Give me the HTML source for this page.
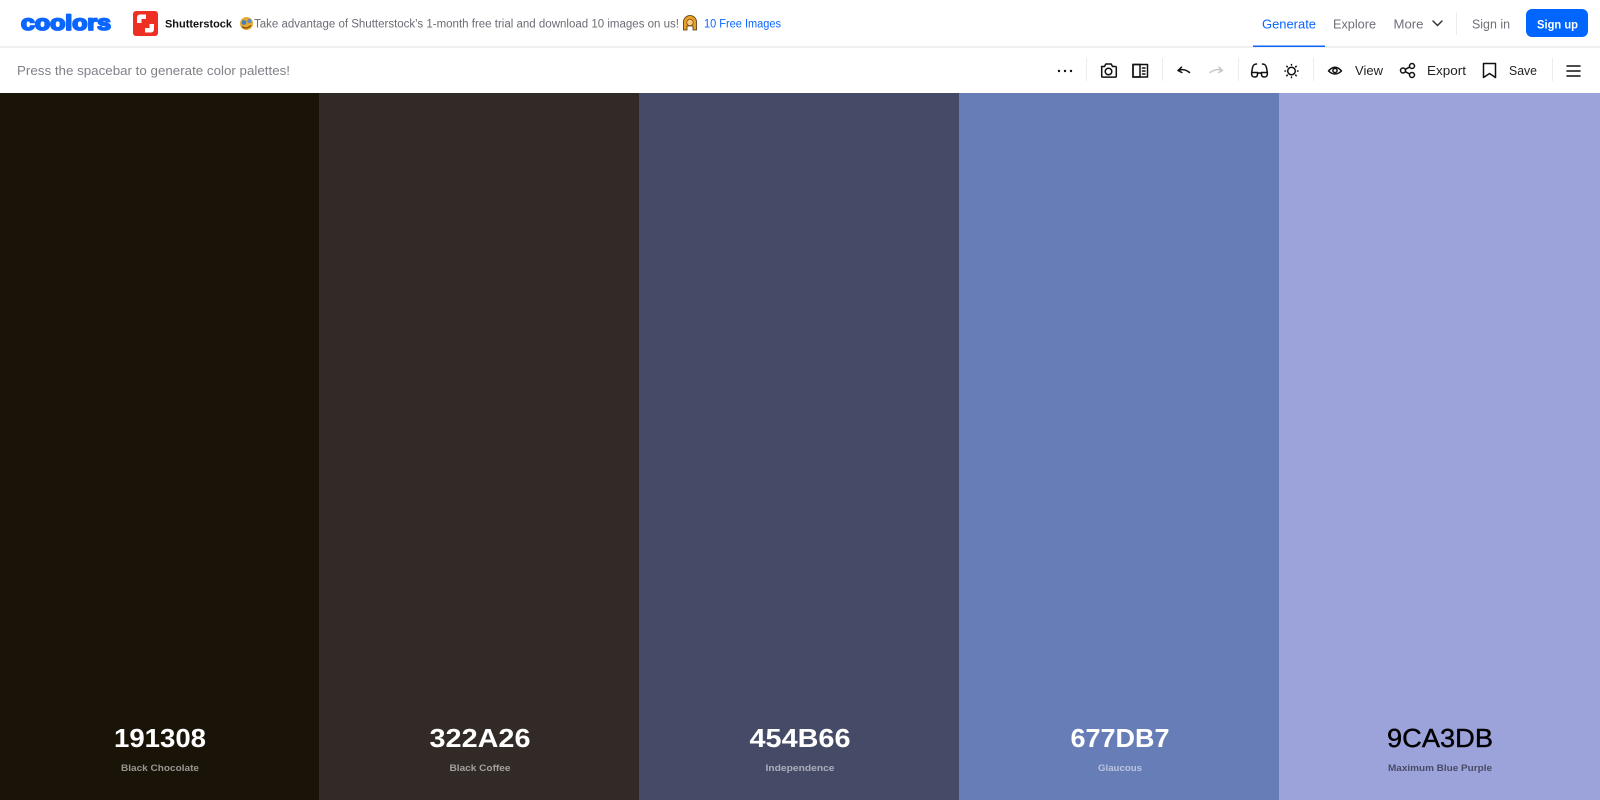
<!DOCTYPE html>
<html lang="en">
<head>
<meta charset="utf-8">
<title>Coolors</title>
<style>
html,body{margin:0;padding:0;width:1600px;height:800px;overflow:hidden;background:#fff}
svg{display:block;position:absolute;left:0;top:0}
text{font-family:"Liberation Sans",Arial,sans-serif}
.nav{font-size:13px;fill:#6f7078}
.tb{font-size:13px;fill:#1f2024}
.hex{font-size:26px;font-weight:700;text-anchor:middle}
.lab{font-size:9.5px;font-weight:700;text-anchor:middle}
.i{fill:none;stroke:#111;stroke-width:1.5;stroke-linecap:round;stroke-linejoin:round}
.s{stroke:#ececee;stroke-width:1}
</style>
</head>
<body>
<svg width="1600" height="800" viewBox="0 0 1600 800" xmlns="http://www.w3.org/2000/svg">
<rect width="1600" height="800" fill="#fff"/>
<rect x="0" y="46" width="1600" height="2" fill="#f0f0f2"/>

<!-- logo -->
<text x="21" y="30" font-size="21" font-weight="700" fill="#0a66ff" stroke="#0a66ff" stroke-width="1.800" stroke-linejoin="round" textLength="90" lengthAdjust="spacingAndGlyphs">coolors</text>

<!-- shutterstock -->
<rect x="133" y="11" width="25" height="25" rx="3" fill="#ee2f24"/>
<path d="M146 14.500h-6a3 3 0 0 0-3 3v5.500h4.500v-4h4.500zM145 32.500h6a3 3 0 0 0 3-3v-5.500h-4.500v4H145z" fill="#fff"/>
<text x="165" y="27.500" font-size="11" font-weight="700" fill="#111" textLength="67" lengthAdjust="spacingAndGlyphs">Shutterstock</text>
<circle cx="246.500" cy="23.500" r="6.500" fill="#e9a92f"/>
<circle cx="244" cy="22.500" r="2.400" fill="#3f7fc0"/>
<circle cx="249.500" cy="21" r="2.200" fill="#5a8fc8"/>
<path d="M242 26.500q4 3.500 9 -1" fill="none" stroke="#7a4a10" stroke-width="1.200"/>
<text x="254" y="27.500" font-size="11.500" fill="#6b6c74" textLength="425" lengthAdjust="spacingAndGlyphs">Take advantage of Shutterstock's 1-month free trial and download 10 images on us!</text>
<path d="M683.500 30v-8a6.500 6.500 0 0 1 13 0v8h-3.500v-4h-6v4z" fill="#e8a024" stroke="#4a3210" stroke-width=".8"/>
<circle cx="690" cy="22.500" r="3.200" fill="#f6cf7a" stroke="#7a3a20" stroke-width=".7"/>
<text x="704" y="27.500" font-size="11.500" fill="#0a66ff" textLength="77" lengthAdjust="spacingAndGlyphs">10 Free Images</text>

<!-- nav -->
<text class="nav" x="1262" y="28.500" style="fill:#0a66ff" textLength="54" lengthAdjust="spacingAndGlyphs">Generate</text>
<rect x="1253" y="45.500" width="72" height="1.500" fill="#0a66ff"/>
<text class="nav" x="1333" y="28.500" textLength="43" lengthAdjust="spacingAndGlyphs">Explore</text>
<text class="nav" x="1393.500" y="28.500" textLength="30" lengthAdjust="spacingAndGlyphs">More</text>
<path d="M1433 21l4.500 4.500 4.500-4.500" fill="none" stroke="#333" stroke-width="1.500" stroke-linecap="round" stroke-linejoin="round"/>
<line class="s" x1="1456.500" y1="12" x2="1456.500" y2="35"/>
<text class="nav" x="1472" y="28.500" textLength="38" lengthAdjust="spacingAndGlyphs">Sign in</text>
<rect x="1526" y="9" width="62" height="28" rx="6" fill="#0066ff"/>
<text x="1537" y="28.500" font-size="12" font-weight="700" fill="#fff" textLength="41" lengthAdjust="spacingAndGlyphs">Sign up</text>

<!-- toolbar -->
<text x="17" y="75" font-size="13" fill="#808188" textLength="273" lengthAdjust="spacingAndGlyphs">Press the spacebar to generate color palettes!</text>

<g fill="#111"><circle cx="1059" cy="71" r="1.200"/><circle cx="1065" cy="71" r="1.200"/><circle cx="1071" cy="71" r="1.200"/></g>
<line class="s" x1="1086.500" y1="58" x2="1086.500" y2="81"/>
<!-- camera -->
<path class="i" d="M1101.500 66.500h3l1.300-2.500h5.400l1.300 2.500h3a.8.800 0 0 1 .8.800v9a.8.800 0 0 1-.8.800h-13a.8.800 0 0 1-.8-.800v-9a.8.800 0 0 1 .8-.800z"/>
<circle class="i" cx="1108.500" cy="71.500" r="3.300"/>
<!-- panel -->
<rect class="i" x="1133" y="64.500" width="14.500" height="12.500"/>
<rect x="1133" y="64.500" width="7" height="12.500" fill="none" stroke="#111" stroke-width="1.500"/>
<path class="i" stroke-width="1" d="M1142.500 68h2.500M1142.500 71h2.500M1142.500 74h2.500"/>
<line class="s" x1="1162.500" y1="58" x2="1162.500" y2="81"/>
<!-- undo -->
<path class="i" d="M1178 70.500q6-2.500 11.500 2M1178 70.500l3.500-3.300M1178 70.500l3.800 2"/>
<!-- redo -->
<path class="i" style="stroke:#c6c7cc" d="M1222.500 70.500q-6-2.500-12.500 2M1222.500 70.500l-3.500-3.300M1222.500 70.500l-3.800 2"/>
<line class="s" x1="1238.500" y1="58" x2="1238.500" y2="81"/>
<!-- glasses -->
<path class="i" d="M1256.500 64l-1.300 .2q-2 .5-2.700 3.500l-.9 5.300M1262.500 64l1.300 .2q2 .5 2.700 3.500l.9 5.300"/>
<path class="i" d="M1251.700 72.500h6l-.4 3q-.4 1.500-2.600 1.500-2.800 0-3-2.500zM1261.300 72.500h6l0 2q-.2 2.500-3 2.500-2.200 0-2.600-1.500zM1257.700 73.500q1.800-1 3.600 0"/>
<!-- sun -->
<circle class="i" cx="1291.500" cy="71" r="3.800"/>
<path class="i" d="M1291.500 64.500v.5M1291.500 77v.5M1285 71h.5M1297.500 71h.5M1286.800 66.300l.5.5M1295.700 75.200l.5.5M1286.800 75.700l.5-.5M1295.700 66.800l.5-.5"/>
<line class="s" x1="1313.500" y1="58" x2="1313.500" y2="81"/>
<!-- eye -->
<path class="i" stroke-width="1.300" d="M1328.500 71q6.500-7.500 13 0q-6.500 6-13 0z"/>
<circle class="i" stroke-width="1.300" cx="1335" cy="70.500" r="2.100"/>
<text class="tb" x="1355" y="75" textLength="28" lengthAdjust="spacingAndGlyphs">View</text>
<!-- share -->
<g class="i"><circle cx="1403" cy="70.500" r="2.500"/><circle cx="1412" cy="66" r="2.500"/><circle cx="1412" cy="75" r="2.500"/><path d="M1405.300 69.300l4.400-2.200M1405.300 71.700l4.400 2.200"/></g>
<text class="tb" x="1427" y="75" textLength="39" lengthAdjust="spacingAndGlyphs">Export</text>
<!-- bookmark -->
<path class="i" d="M1483.500 63.500h12v14l-6-4-6 4z"/>
<text class="tb" x="1509" y="75" textLength="28" lengthAdjust="spacingAndGlyphs">Save</text>
<line class="s" x1="1552.500" y1="58" x2="1552.500" y2="81"/>
<path class="i" stroke-linecap="butt" d="M1567 66h13M1567 71h13M1567 76h13"/>

<!-- palette -->
<rect x="0" y="93" width="319" height="707" fill="#191308"/>
<rect x="319" y="93" width="320" height="707" fill="#322a26"/>
<rect x="639" y="93" width="320" height="707" fill="#454b66"/>
<rect x="959" y="93" width="320" height="707" fill="#677db7"/>
<rect x="1279" y="93" width="321" height="707" fill="#9ca3db"/>

<text class="hex" x="160" y="747" fill="#fff" textLength="92" lengthAdjust="spacingAndGlyphs">191308</text>
<text class="lab" x="160" y="771" fill="#fff" fill-opacity=".55" textLength="78" lengthAdjust="spacingAndGlyphs">Black Chocolate</text>
<text class="hex" x="480" y="747" fill="#fff" textLength="101" lengthAdjust="spacingAndGlyphs">322A26</text>
<text class="lab" x="480" y="771" fill="#fff" fill-opacity=".55" textLength="61" lengthAdjust="spacingAndGlyphs">Black Coffee</text>
<text class="hex" x="800" y="747" fill="#fff" textLength="101" lengthAdjust="spacingAndGlyphs">454B66</text>
<text class="lab" x="800" y="771" fill="#fff" fill-opacity=".55" textLength="69" lengthAdjust="spacingAndGlyphs">Independence</text>
<text class="hex" x="1120" y="747" fill="#fff" textLength="99" lengthAdjust="spacingAndGlyphs">677DB7</text>
<text class="lab" x="1120" y="771" fill="#fff" fill-opacity=".55" textLength="44" lengthAdjust="spacingAndGlyphs">Glaucous</text>
<text class="hex" x="1440" y="747" fill="#000" style="font-weight:400;stroke:#000;stroke-width:.4" textLength="106" lengthAdjust="spacingAndGlyphs">9CA3DB</text>
<text class="lab" x="1440" y="771" fill="#000" fill-opacity=".55" textLength="104" lengthAdjust="spacingAndGlyphs">Maximum Blue Purple</text>
</svg>
</body>
</html>
